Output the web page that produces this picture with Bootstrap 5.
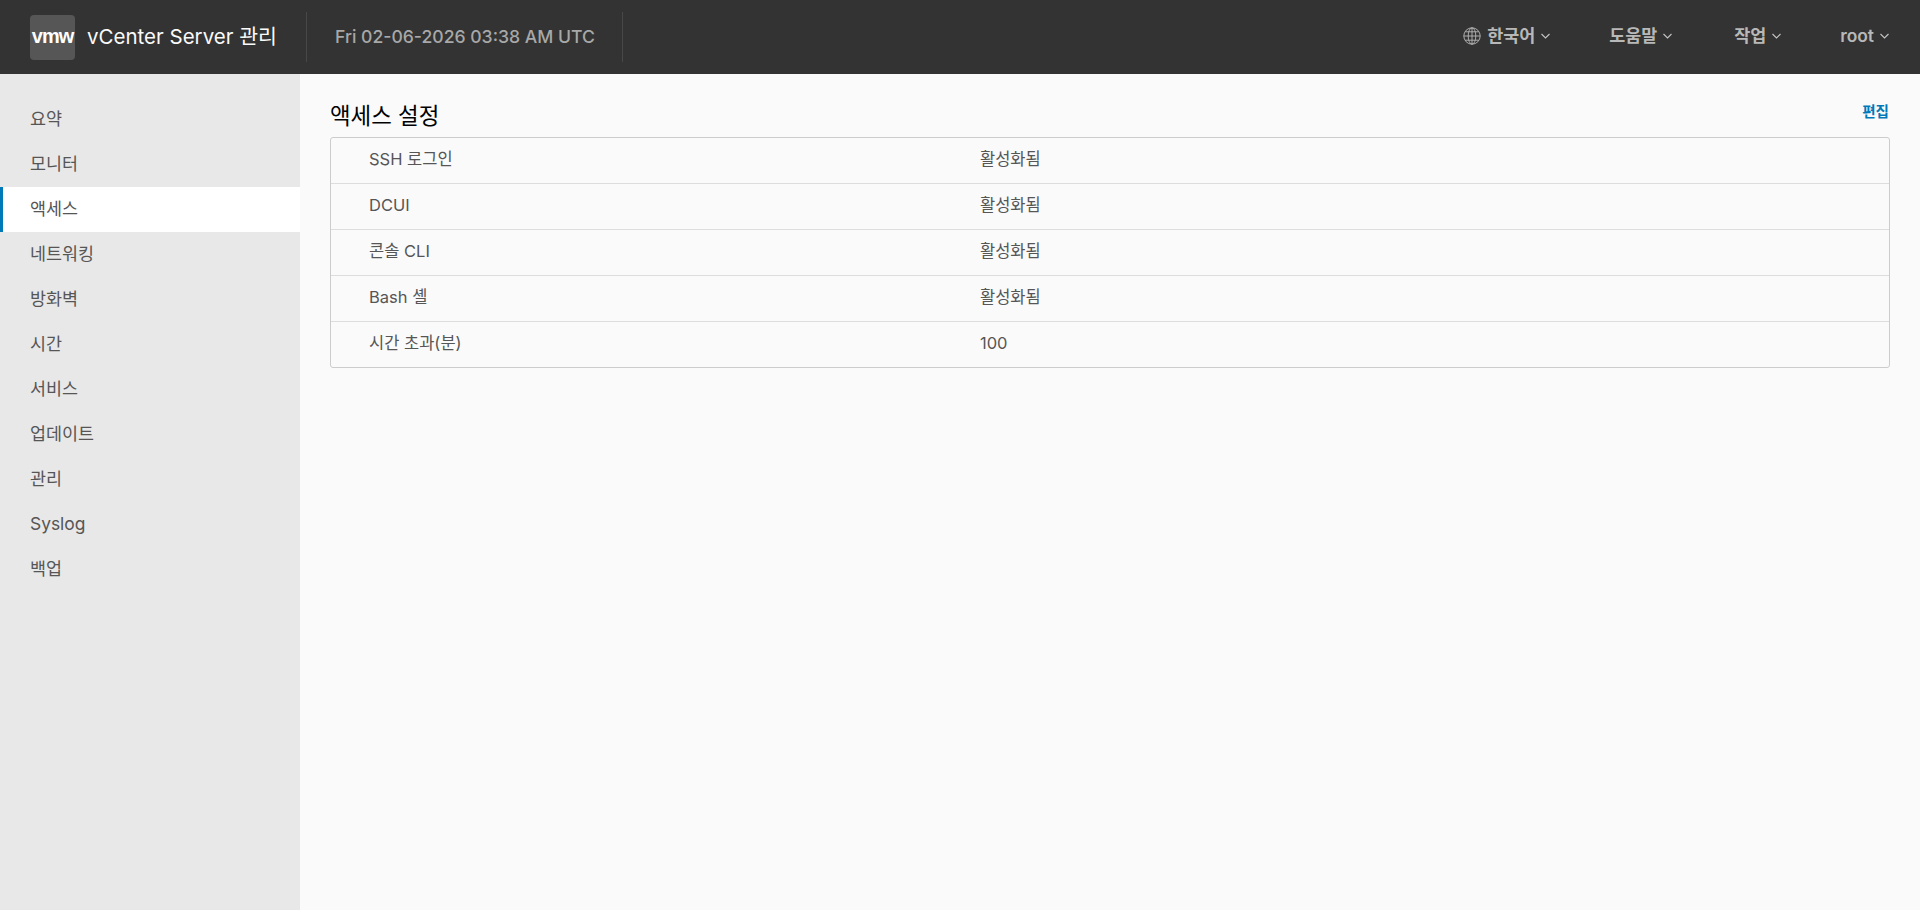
<!DOCTYPE html>
<html lang="ko">
<head>
    <meta charset="UTF-8">
    <meta name="viewport" content="width=device-width, initial-scale=1.0">
    <title>vCenter Server 관리</title>
    <link href="https://cdn.jsdelivr.net/npm/bootstrap@5.3.3/dist/css/bootstrap.min.css" rel="stylesheet">
    <style>
        html, body { height: 100%; overflow: hidden; }
        body { font-family: Inter, "Noto Sans CJK KR", sans-serif; background: #fafafa; color: #565656; }
        .vc-header { height: 74px; background: #333; flex-wrap: nowrap; padding: 0 31px 0 30px; }
        .vc-logo { width: 45px; height: 45px; background: #565656; border-radius: 4px; color: #fff; font: bold 20px/43px "Liberation Sans", sans-serif; letter-spacing: -1px; text-align: center; }
        .vc-brand { font-size: 20.5px; color: #fafafa; margin-left: 12px; width: 219px; white-space: nowrap; }
        .vc-date { height: 50px; border-left: 1px solid #484848; border-right: 1px solid #484848; width: 317px; padding-left: 28px; font-size: 17.6px; font-weight: 500; color: #a8a8a8; white-space: nowrap; }
        .vc-menu { font-size: 17.4px; font-weight: 600; color: #b8b8b8; padding-bottom: 2px; }
        .vc-menu svg { display: block; }
        .vc-chev { margin-left: 6px; }
        .vc-item { margin-left: 62px; }
        .vc-item-tight { margin-left: 59px; }
        .vc-lang { margin-left: 6px; }
        .vc-body { height: 836px; }
        .vc-side { width: 300px; background: #e8e8e8; padding-top: 23px; flex: none; border-radius: 0; }
        .vc-side .list-group-item { height: 45px; background: transparent; border: 0; border-radius: 0; padding: 0 0 0 30px; line-height: 43px; font-size: 17.4px; color: #565656; }
        .vc-side .list-group-item.active { background: #fff; color: #565656; box-shadow: inset 3px 0 0 #0079b8; margin-top: 0; }
        .vc-main { padding: 23px 30px 0 30px; }
        .vc-head { margin-bottom: 3px; }
        .vc-title { font-size: 22.4px; font-weight: 400; color: #000; line-height: 37px; margin: 0; }
        .vc-edit { font-size: 14.6px; font-weight: 700; color: #0079b8; text-decoration: none; margin: 0 1px 5px 0; }
        .vc-card { border: 1px solid #ccc; border-radius: 3px; background: #fafafa; }
        .vc-row { height: 46px; border-bottom: 1px solid #ddd; font-size: 16.5px; line-height: 42px; color: #565656; }
        .vc-row:last-child { height: 45px; border-bottom: 0; }
        .vc-key { width: 649px; padding-left: 38px; }
    </style>
</head>
<body>
    <header class="navbar vc-header">
        <div class="d-flex align-items-center">
            <div class="vc-logo">vmw</div>
            <div class="vc-brand">vCenter Server 관리</div>
            <div class="vc-date d-flex align-items-center">Fri 02-06-2026 03:38 AM UTC</div>
        </div>
        <div class="vc-menu d-flex align-items-center">
            <svg width="18" height="18" viewBox="0 0 18 18" fill="none" stroke="#b8b8b8" stroke-width="0.9">
                <circle cx="9" cy="9" r="8.2"/>
                <ellipse cx="9" cy="9" rx="3.8" ry="8.2"/>
                <path d="M9 .8V17.2M.8 9H17.2M2.2 4.8H15.8M2.2 13.2H15.8"/>
            </svg>
            <span class="vc-lang">한국어</span>
            <svg class="vc-chev" width="9" height="6" viewBox="0 0 9 6" fill="none" stroke="#c4c4c4" stroke-width="1.1"><path d="M.5 1 4.5 5 8.5 1"/></svg>
            <span class="vc-item-tight">도움말</span>
            <svg class="vc-chev" width="9" height="6" viewBox="0 0 9 6" fill="none" stroke="#c4c4c4" stroke-width="1.1"><path d="M.5 1 4.5 5 8.5 1"/></svg>
            <span class="vc-item">작업</span>
            <svg class="vc-chev" width="9" height="6" viewBox="0 0 9 6" fill="none" stroke="#c4c4c4" stroke-width="1.1"><path d="M.5 1 4.5 5 8.5 1"/></svg>
            <span class="vc-item-tight">root</span>
            <svg class="vc-chev" width="9" height="6" viewBox="0 0 9 6" fill="none" stroke="#c4c4c4" stroke-width="1.1"><path d="M.5 1 4.5 5 8.5 1"/></svg>
        </div>
    </header>
    <div class="d-flex vc-body">
        <nav class="vc-side list-group">
            <a class="list-group-item" href="#">요약</a>
            <a class="list-group-item" href="#">모니터</a>
            <a class="list-group-item active" href="#">액세스</a>
            <a class="list-group-item" href="#">네트워킹</a>
            <a class="list-group-item" href="#">방화벽</a>
            <a class="list-group-item" href="#">시간</a>
            <a class="list-group-item" href="#">서비스</a>
            <a class="list-group-item" href="#">업데이트</a>
            <a class="list-group-item" href="#">관리</a>
            <a class="list-group-item" href="#">Syslog</a>
            <a class="list-group-item" href="#">백업</a>
        </nav>
        <main class="vc-main flex-grow-1">
            <div class="vc-head d-flex justify-content-between align-items-center">
                <h1 class="vc-title">액세스 설정</h1>
                <a class="vc-edit" href="#">편집</a>
            </div>
            <div class="vc-card">
                <div class="vc-row d-flex"><div class="vc-key">SSH 로그인</div><div>활성화됨</div></div>
                <div class="vc-row d-flex"><div class="vc-key">DCUI</div><div>활성화됨</div></div>
                <div class="vc-row d-flex"><div class="vc-key">콘솔 CLI</div><div>활성화됨</div></div>
                <div class="vc-row d-flex"><div class="vc-key">Bash 셸</div><div>활성화됨</div></div>
                <div class="vc-row d-flex"><div class="vc-key">시간 초과(분)</div><div>100</div></div>
            </div>
        </main>
    </div>
    <script src="https://cdn.jsdelivr.net/npm/bootstrap@5.3.3/dist/js/bootstrap.bundle.min.js"></script>
</body>
</html>
